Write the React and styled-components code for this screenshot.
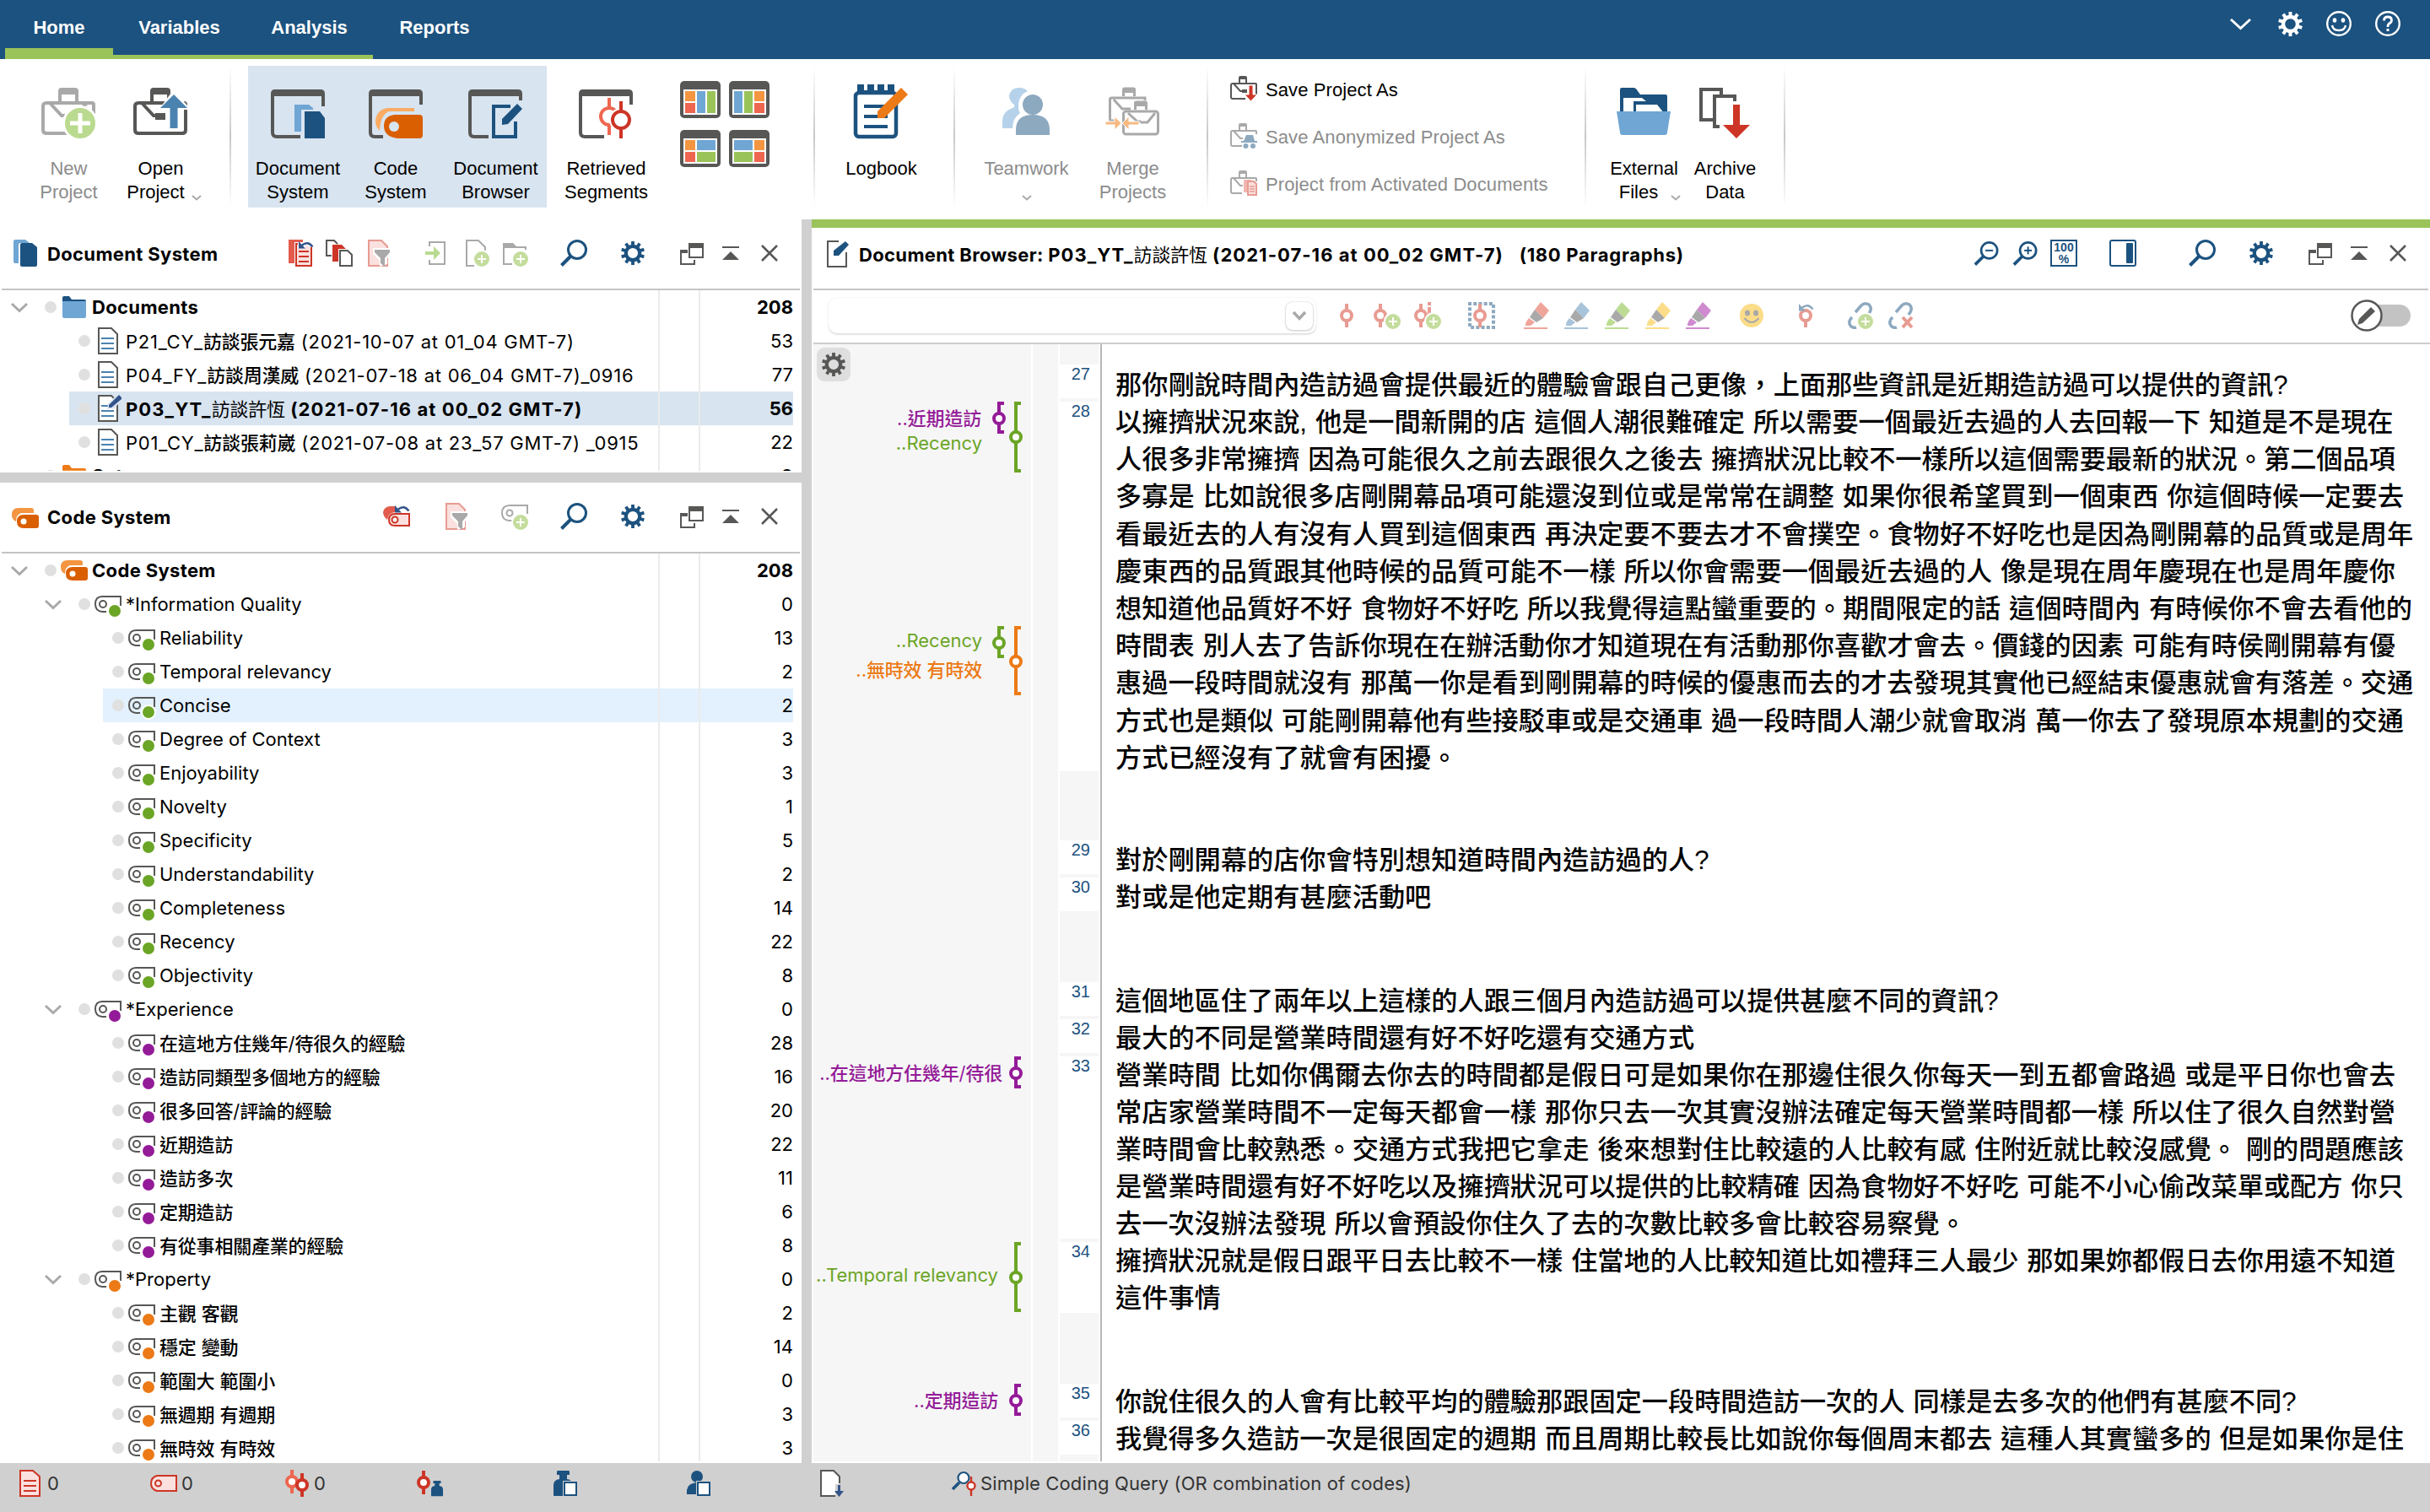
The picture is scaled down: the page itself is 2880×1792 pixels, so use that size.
import React from "react";
import styled, { createGlobalStyle, css } from "styled-components";

const C = {
  navy: "#1c527f",
  lime: "#9ac45a",
  ink: "#575756",
  grey: "#a9a9a9",
  bar: "#d0d0d0",
  line: "#c4c4c4",
  sky: "#6fa6d4",
  red: "#cd3526",
  coral: "#ee6650",
  orange: "#ec7a16",
  deepOrange: "#da5f00",
  select: "#d8e4f0",
  hover: "#e3f1fe",
  margin: "#f6f6f6",
  paleRed: "#e89b92",
  blush: "#fae0de",
  paleGreen: "#c4dc9c",
  paleNavy: "#8da9c0",
  codeGreen: "#6ba526",
  codePurple: "#941b98",
};

const ui = `Inter, "Noto Sans CJK TC", sans-serif`;
const arial = `"Liberation Sans", "Noto Sans CJK TC", sans-serif`;

const Global = createGlobalStyle`
  *, *::before, *::after { box-sizing: border-box; }
  body { margin: 0; background: #fff; }
  svg { display: block; flex: none; overflow: visible; }
`;

/* ---------- text helpers ---------- */

const Han = styled.span`
  font-family: "Noto Sans CJK TC", sans-serif;
  font-weight: ${(p) => p.$weight};
  letter-spacing: -0.2px;
`;
const Tracked = styled.span`
  letter-spacing: ${(p) => p.$ls}px;
`;

function Mixed({ children, weight = 500 }) {
  return String(children)
    .split(/([\u3000-\u9fff\uff00-\uffef]+)/)
    .filter(Boolean)
    .map((part, i) =>
      /[\u3000-\u9fff\uff00-\uffef]/.test(part) ? (
        <Han key={i} $weight={weight}>{part}</Han>
      ) : (
        <React.Fragment key={i}>{part}</React.Fragment>
      )
    );
}

/* ---------- drawing primitives ---------- */

const Svg = ({ w, h, children }) => (
  <svg width={w} height={h} viewBox={`0 0 ${w} ${h}`} fill="none">{children}</svg>
);

const Chevron = ({ w = 20, h = 11, color = C.grey, s = 3 }) => (
  <Svg w={w} h={h}>
    <path d={`M1 1L${w / 2} ${h - 1.5}L${w - 1} 1`} stroke={color} strokeWidth={s} />
  </Svg>
);

const Gear = ({ size = 28, color = C.navy }) => (
  <svg width={size} height={size} viewBox="-14 -14 28 28" fill="none">
    {Array.from({ length: 10 }, (_, i) => (
      <rect key={i} x="-1.9" y="-14" width="3.8" height="6" fill={color} transform={`rotate(${i * 36})`} />
    ))}
    <circle r="8.2" stroke={color} strokeWidth="4.2" />
  </svg>
);

const Search = ({ mark, w = 32, h = 32 }) => (
  <svg width={w} height={h} viewBox="0 0 32 32" fill="none">
    <circle cx="20" cy="12" r="10.5" stroke={C.navy} strokeWidth="3" />
    <path d="M12.5 19.5L1.5 30.5" stroke={C.navy} strokeWidth="4" />
    {mark && <path d="M15 12h10" stroke={C.navy} strokeWidth="2.2" />}
    {mark === "+" && <path d="M20 7v10" stroke={C.navy} strokeWidth="2.2" />}
  </svg>
);

const Plus = ({ cx, cy, r = 9, color = C.paleGreen, arm = 5, s = 2, ring = 2 }) => (
  <g>
    <circle cx={cx} cy={cy} r={r + ring / 2} fill={color} stroke="#fff" strokeWidth={ring} />
    <path d={`M${cx - arm} ${cy}h${arm * 2}M${cx} ${cy - arm}v${arm * 2}`} stroke="#fff" strokeWidth={s} />
  </g>
);

const Knot = ({ x, y, color, r = 6, s = 4, top, bottom, fill = "none" }) => (
  <g stroke={color} strokeWidth={s}>
    <path d={`M${x} ${top}V${y - r}M${x} ${y + r}V${bottom}`} />
    <circle cx={x} cy={y} r={r} fill={fill} />
  </g>
);

/* ---------- ribbon icons, 64 x 64 ---------- */

const Case = ({ color, x = 0, y = 4, right = true }) => (
  <g transform={`translate(${x} ${y})`}>
    <path d="M20 16V4q0-4 4-4h16q4 0 4 4v12h-4V8H24v8z" fill={color} />
    <path
      d={right ? "M62 26V20q0-2-2-2H6q-4 0-4 4v28q0 4 4 4h52q4 0 4-4V26" : "M36 54H6q-4 0-4-4V22q0-4 4-4h52q4 0 4 4v2"}
      stroke={color}
      strokeWidth="4"
    />
    <path d="M10 18L24 33h4" stroke={color} strokeWidth="4" />
  </g>
);

const NewProjectIcon = () => (
  <Svg w={64} h={64}>
    <Case color={C.grey} />
    <path d="M54 22L42 34" stroke={C.grey} strokeWidth="4" />
    <Plus cx={46} cy={46} r={18} color="#b9da8f" arm={12} s={5} ring={3} />
  </Svg>
);

const OpenProjectIcon = () => (
  <Svg w={64} h={64}>
    <Case color={C.ink} />
    <path d="M26 34h12v8H26z" fill={C.ink} />
    <path d="M48 6L68 30H55V56H42V30H30z" fill="#fff" />
    <path d="M48 12L64 28H52.500V52H43.500V28H32z" fill="#4b83b0" />
  </Svg>
);

const Frame = ({ side, foot }) => (
  <g transform="translate(0 6)">
    <path d="M0 8V5q0-5 5-5h54q5 0 5 5v3z" fill={C.ink} />
    <path d={`M2 6V51q0 5 5 5H${foot}M62 6V${side}`} stroke={C.ink} strokeWidth="4" />
  </g>
);

const DocSystemIcon = () => (
  <Svg w={64} h={64}>
    <Frame side={20} foot={35} />
    <path d="M28 24H45L50 28V30H36V56H28z" fill={C.sky} />
    <path d="M40 32H58L64 40V64H40z" fill={C.navy} />
  </Svg>
);

const CodeSystemIcon = () => (
  <Svg w={64} h={64}>
    <Frame side={18} foot={17} />
    <path d="M54 28H22Q9 30 8 44Q8 50 13 55Q14 36 24 32H54z" fill="#fbac64" />
    <path d="M30 36H60q4 0 4 4V60q0 4-4 4H34Q18 62 18 49Q18 38 30 36z" fill={C.deepOrange} />
    <circle cx="30" cy="50" r="6" fill={C.select} />
  </Svg>
);

const DocBrowserIcon = () => (
  <Svg w={64} h={64}>
    <Frame side={13} foot={24} />
    <path d="M50 26H30V62H56V44" stroke={C.navy} strokeWidth="4" />
    <path d="M58 23L64 29L47 47L40 48L40 41z" fill={C.navy} />
  </Svg>
);

const SegmentsIcon = () => (
  <Svg w={64} h={64}>
    <Frame side={18} foot={30} />
    <Knot x={36} y={38} r={10} color={C.coral} top={16} bottom={60} />
    <circle cx="50" cy="42" r="14" fill="#fff" />
    <Knot x={50} y={42} r={10} color={C.red} top={20} bottom={64} />
  </Svg>
);

const LogbookIcon = () => (
  <Svg w={64} h={64}>
    <path d="M4 12V0h8v7h4V0h8v7h4V0h8v7h4V0h8v12z" fill={C.navy} />
    <rect x="2" y="10" width="48" height="52" rx="4" stroke={C.navy} strokeWidth="4.500" />
    <path d="M12 26h24M12 38h28M12 50h28" stroke={C.navy} strokeWidth="4" />
    <path d="M56 4L64 12L36 40H28V32z" fill={C.orange} />
  </Svg>
);

const TeamIcon = () => (
  <Svg w={56} h={64}>
    <path d="M0 52V44Q0 32 12 28Q15 27 14 24Q8 20 8 13Q10 4 20 4Q26 4 30 8Q20 12 19 24Q19 32 21 34Q12 40 12 52z" fill="#b6d2ea" />
    <circle cx="36" cy="24" r="12" fill={C.paleNavy} />
    <path d="M16 60V54Q16 36 36 36Q56 36 56 54V60z" fill={C.paleNavy} />
  </Svg>
);

const MergeIcon = () => (
  <Svg w={64} h={64}>
    <g stroke={C.grey} strokeWidth="3">
      <path d="M21.500 14V6q0-1 1-1h11q1 0 1 1V14M11 43H6q-.5 0-.5-3V18q0-2 2-2H47v3M10 18L20 29h10" />
      <path d="M35.500 30V22q0-1 1-1h11q1 0 1 1V30" />
      <rect x="21.500" y="32" width="41" height="27" rx="3" fill="#fff" />
      <path d="M27 34L38 44h4M59 34L50 45h-8" />
    </g>
    <path d="M21 4h14v6H21zM35 20h14v6H35z" fill={C.grey} />
    <path d="M0 44h11v-6l8 8-8 8v-6H0zM40 44H28v-6l-8 8 8 8v-6h12z" fill="#f6ba82" stroke="#fff" strokeWidth="1" />
  </Svg>
);

const ExternalIcon = () => (
  <Svg w={64} h={64}>
    <path d="M4 34V6q0-2 2-2H20q3 0 5 4l3 4H58q2 0 2 2V34z" fill={C.navy} />
    <path d="M8 34V16H30l5 4H20V34zM23 34V24H48L56 34z" fill="#fff" />
    <path d="M0 32H64L60 57q0 3-3 3H7q-3 0-3-3z" fill={C.sky} />
  </Svg>
);

const ArchiveIcon = () => (
  <Svg w={60} h={64}>
    <path d="M26 14V6H2V42H16" stroke={C.ink} strokeWidth="4" />
    <path d="M42 20V14H18V50H24" stroke={C.ink} strokeWidth="4" />
    <path d="M40 24h8V48H60L44 64L28 48H40z" fill={C.red} />
  </Svg>
);

const LayoutIcon = ({ kind }) => {
  const o = "#f49541", r = C.coral, b = C.sky, g = C.lime;
  const cells = {
    a: [[6, 12, 12, 12, o], [6, 26, 12, 12, r], [20, 12, 10, 26, b], [32, 12, 10, 26, g]],
    b: [[6, 12, 10, 26, b], [18, 12, 10, 26, g], [30, 12, 12, 12, o], [30, 26, 12, 12, r]],
    c: [[6, 12, 12, 12, o], [6, 26, 12, 12, r], [20, 12, 22, 12, b], [20, 26, 22, 12, g]],
    d: [[6, 12, 22, 12, b], [6, 26, 22, 12, g], [30, 12, 12, 12, o], [30, 26, 12, 12, r]],
  }[kind];
  return (
    <Svg w={48} h={44}>
      <rect width="48" height="44" rx="5" fill={C.ink} />
      <rect x="4" y="10" width="40" height="30" fill="#fff" />
      {cells.map(([x, y, w, h, f], i) => <rect key={i} x={x} y={y} width={w} height={h} fill={f} />)}
    </Svg>
  );
};

const SmallCase = ({ color, children }) => (
  <Svg w={32} h={30}>
    <path d="M10 8V2q0-2 2-2h6q2 0 2 2v6h-2V4h-6v4z" fill={color} />
    <path d="M31 13V9.500q0-.5-1-.5H3Q1 9 1 11V25q0 2 2 2H14" stroke={color} strokeWidth="2" />
    <path d="M4 9l8 9h3" stroke={color} strokeWidth="2" />
    {children}
  </Svg>
);

const SaveIcon = () => (
  <SmallCase color={C.ink}>
    <path d="M14 27h4M31 12v10" stroke={C.ink} strokeWidth="2" />
    <path d="M14 16h6v4h-6z" fill={C.ink} />
    <path d="M22 11h5V22h5L24.500 30L17 22h5z" fill={C.red} stroke="#fff" strokeWidth="1" />
  </SmallCase>
);
const AnonIcon = () => (
  <SmallCase color={C.grey}>
    <path d="M19 14h8l2 7h3v2H13v-2h3z" fill={C.paleNavy} />
    <circle cx="18.500" cy="27" r="3" fill={C.paleNavy} />
    <circle cx="27" cy="27" r="3" fill={C.paleNavy} />
  </SmallCase>
);
const ActivatedIcon = () => (
  <SmallCase color={C.grey}>
    <path d="M16 11h9v3h-5v12h-4z" fill="#f3b5af" />
    <path d="M21 13h7l3 3v13H21z" fill={C.blush} stroke={C.paleRed} strokeWidth="2" />
    <path d="M23 19h6M23 22h6M23 25h6" stroke={C.paleRed} strokeWidth="1.500" />
  </SmallCase>
);

/* ---------- panel icons ---------- */

const DocStack = () => (
  <Svg w={28} h={32}>
    <path d="M0 2q0-2 2-2H14l5 4H8Q6 4 6 7V28H2q-2 0-2-2z" fill={C.sky} />
    <path d="M8 6q0-2 2-2H22l6 5V30q0 2-2 2H10q-2 0-2-2z" fill={C.navy} />
  </Svg>
);
const CodeStack = () => (
  <Svg w={32} h={24}>
    <path d="M8 0H23q3 0 3 3V6H11Q5 8 5 16Q0 14 0 8Q0 0 8 0z" fill="#f49541" />
    <path d="M14 8H29q3 0 3 3V21q0 3-3 3H14Q6 24 6 16Q6 8 14 8z" fill={C.deepOrange} />
    <circle cx="14" cy="16" r="3.500" fill="#fff" />
  </Svg>
);
const UndoArrow = ({ x, y, color = "#33548a" }) => (
  <g transform={`translate(${x} ${y})`}>
    <path d="M4 4.500Q11-1 16.500 6.500" stroke={color} strokeWidth="2.500" />
    <path d="M0 0V8.500H8z" fill={color} />
  </g>
);
const ResetDocs = () => (
  <Svg w={30} h={32}>
    <path d="M0 0H17V3H7V28H0z" fill="#e25b4d" />
    <path d="M9 5H27V31H9z" fill={C.blush} stroke={C.red} strokeWidth="2" />
    <path d="M12 14h12M12 20h12M12 26h12" stroke={C.red} strokeWidth="2" />
    <path d="M11 3H30V9H26L20 6V10H11z" fill="#fff" />
    <UndoArrow x={12} y={2} />
  </Svg>
);
const ThreeDocs = () => (
  <Svg w={32} h={32}>
    <path d="M7 19H1V1H10L14 5" stroke={C.ink} strokeWidth="2" />
    <path d="M8 6H19L24 11H15V26H8z" fill={C.red} />
    <path d="M17 31V13H26L31 18V31z" fill="#fff" stroke={C.ink} strokeWidth="2" />
  </Svg>
);
const FilterDoc = () => (
  <Svg w={26} h={32}>
    <path d="M1 31V1H16L23 8V31z" fill={C.blush} stroke={C.paleRed} strokeWidth="2" />
    <path d="M6 10H29V17L23 22V29H22L14 32V25L6 17z" fill="#fff" />
    <path d="M8 12H26V15L20 22V32L15 28V22L8 15z" fill={C.grey} />
  </Svg>
);
const ImportIcon = () => (
  <Svg w={24} h={28}>
    <path d="M5 6V1H23V27H5V22" stroke={C.grey} strokeWidth="2" />
    <path d="M0 12H10V6L18 14L10 22V16H0z" fill="#b9da8f" />
  </Svg>
);
const NewDoc = () => (
  <Svg w={28} h={32}>
    <path d="M10 31H1V1H15L23 9V13" stroke={C.grey} strokeWidth="2" />
    <Plus cx={19} cy={23} />
  </Svg>
);
const NewFolder = () => (
  <Svg w={30} h={28}>
    <path d="M0 0H12L16 4H28V6H0z" fill={C.grey} />
    <path d="M27 4V8M1 4V25H11" stroke={C.grey} strokeWidth="2" />
    <Plus cx={21} cy={19} />
  </Svg>
);
const ResetCodes = () => (
  <Svg w={32} h={26}>
    <path d="M8 2H14V9Q6 10 5 18Q0 14 0 9Q1 3 8 2z" fill="#e25b4d" />
    <path d="M14 11H31V25H14Q7 25 7 18Q7 11 14 11z" fill={C.blush} stroke={C.red} strokeWidth="2" />
    <circle cx="14" cy="18" r="3.500" fill="#fff" stroke={C.red} strokeWidth="2" />
    <UndoArrow x={14} y={1} />
  </Svg>
);
const NewCode = () => (
  <Svg w={32} h={30}>
    <path d="M13 19H9Q1 18 1 10Q1 1 10 1H31V11" stroke={C.grey} strokeWidth="2" />
    <circle cx="10" cy="10" r="3.500" stroke={C.grey} strokeWidth="2" />
    <Plus cx={23} cy={21} />
  </Svg>
);
const WindowIcon = () => (
  <Svg w={28} h={26}>
    <path d="M0 8H9V12H0z" fill={C.ink} />
    <path d="M1 10V25H17V20" stroke={C.ink} strokeWidth="2" />
    <rect x="11" y="1" width="16" height="16" stroke={C.ink} strokeWidth="2" />
    <path d="M10 0H28V6H10z" fill={C.ink} />
  </Svg>
);
const CollapseIcon = () => (
  <Svg w={20} h={16}>
    <path d="M0 0H20V2H0zM10 6L20 16H0z" fill={C.ink} />
  </Svg>
);
const CloseIcon = () => (
  <Svg w={20} h={20}>
    <path d="M1 1L19 19M19 1L1 19" stroke={C.ink} strokeWidth="2.500" />
  </Svg>
);
const EditDoc = () => (
  <Svg w={28} h={32}>
    <path d="M14 1H1V31H23V14" stroke={C.ink} strokeWidth="2" />
    <path d="M22 1L26 5L14 18H8V12z" fill={C.navy} />
  </Svg>
);
const PercentIcon = () => (
  <svg width="32" height="32" viewBox="0 0 32 32" fill="none">
    <rect x="1" y="1" width="30" height="30" stroke={C.navy} strokeWidth="2" />
    <text x="16" y="14" textAnchor="middle" fontFamily={arial} fontSize="14" fontWeight="700" fill={C.navy}>100</text>
    <text x="16" y="28" textAnchor="middle" fontFamily={arial} fontSize="14" fontWeight="700" fill={C.navy}>%</text>
  </svg>
);
const SidebarIcon = () => (
  <Svg w={32} h={32}>
    <rect x="1" y="1" width="30" height="30" rx="2" stroke={C.navy} strokeWidth="2" />
    <rect x="20" y="4" width="8" height="24" rx="1" fill={C.navy} />
  </Svg>
);

/* ---------- tree icons ---------- */

const Folder = ({ front = C.sky, back = C.navy }) => (
  <Svg w={28} h={26}>
    <path d="M0 8V2q0-2 2-2H8l3 4H26q2 0 2 2V8z" fill={back} />
    <path d="M0 6H28V24q0 2-2 2H2q-2 0-2-2z" fill={front} />
  </Svg>
);
const DocFile = ({ edit }) => (
  <Svg w={28} h={32}>
    <path d="M1 1H16L23 8V31H1z" fill="#fff" stroke={C.ink} strokeWidth="2" />
    <path d="M4 13h15M4 19h15M4 25h15" stroke="#4b83b0" strokeWidth="2" />
    {edit && (
      <>
        <path d="M23-1L30 3L20 16L11 17L12 11z" fill={C.select} />
        <path d="M25 0L28 3V5L16 15H13V12z" fill="#33548a" />
      </>
    )}
  </Svg>
);
const CodeTag = ({ color }) => (
  <Svg w={32} h={20}>
    <path d="M14 19H9Q1 18 1 10Q1 1 9 1H31V12" stroke={C.ink} strokeWidth="2" />
    <circle cx="10" cy="10" r="4" stroke={C.ink} strokeWidth="2" />
    <circle cx="24" cy="18" r="8" fill={color} stroke="#fff" strokeWidth="2" />
  </Svg>
);

/* ---------- coding toolbar icons ---------- */

const CodeMark = () => <Svg w={16} h={28}><Knot x={8} y={14} color={C.paleRed} top={0} bottom={28} /></Svg>;
const CodeMarkPlus = () => (
  <Svg w={32} h={30}>
    <Knot x={8} y={14} color={C.paleRed} top={0} bottom={28} />
    <Plus cx={23} cy={21} />
  </Svg>
);
const CodeMarkInfo = () => (
  <Svg w={32} h={32}>
    <Knot x={8} y={16} color={C.paleRed} top={2} bottom={30} />
    <path d="M18 0V4M18 6V15" stroke={C.paleRed} strokeWidth="4" />
    <Plus cx={23} cy={23} />
  </Svg>
);
const CodeFrame = () => (
  <Svg w={32} h={32}>
    <rect x="2" y="2" width="28" height="28" stroke={C.paleNavy} strokeWidth="4" strokeDasharray="4 2.220" strokeDashoffset="2" />
    <Knot x={14} y={16} color={C.paleRed} top={2} bottom={30} />
  </Svg>
);
const Marker = ({ color }) => (
  <Svg w={30} h={32}>
    <path d="M20 0L30 10L23 19L13 9z" fill={color} />
    <path d="M13 9L23 19L15 24L7 18z" fill={C.grey} />
    <path d="M6 19L13 24L8 28H2Q1 25 6 19z" fill={color} />
    <path d="M0 30H28V32H0z" fill={color} />
  </Svg>
);
const Smile = () => (
  <Svg w={28} h={28}>
    <circle cx="14" cy="14" r="14" fill="#fbdc88" />
    <ellipse cx="9" cy="11" rx="3" ry="3.500" fill={C.grey} />
    <ellipse cx="19" cy="11" rx="3" ry="3.500" fill={C.grey} />
    <path d="M5.500 17Q14 27 22.500 17" stroke={C.grey} strokeWidth="2" />
  </Svg>
);
const UndoCode = () => (
  <Svg w={18} h={28}>
    <Knot x={8} y={14} color={C.paleRed} top={0} bottom={28} />
    <path d="M0 0H18V6H0z" fill="#fff" />
    <UndoArrow x={0} y={0} color={C.paleNavy} />
  </Svg>
);
const Chain = () => (
  <g stroke={C.paleNavy} strokeWidth="3.500">
    <path d="M9 12L16 4Q20 0 25 3Q29 7 26 12L24 15" />
    <path d="M5 18Q-1 24 4 29Q7 31 10 30" />
  </g>
);
const LinkPlus = () => <Svg w={30} h={32}><Chain /><Plus cx={21} cy={23} /></Svg>;
const LinkCut = () => (
  <Svg w={30} h={32}>
    <Chain />
    <path d="M17 18L28 30M28 18L17 30" stroke={C.paleRed} strokeWidth="4" />
  </Svg>
);

/* ---------- status icons ---------- */

const StatusDoc = () => (
  <Svg w={25} h={32}>
    <path d="M1 1H16L24 8V31H1z" fill={C.blush} stroke={C.red} strokeWidth="2" />
    <path d="M5 13h15M5 19h15M5 25h15" stroke={C.red} strokeWidth="2" />
  </Svg>
);
const StatusTag = () => (
  <Svg w={32} h={20}>
    <path d="M8 1H31V19H8Q1 17 1 10Q1 3 8 1z" fill={C.blush} stroke={C.red} strokeWidth="2" />
    <circle cx="9.500" cy="10" r="3.500" stroke={C.red} strokeWidth="2" />
  </Svg>
);
const StatusCodes = () => (
  <Svg w={28} h={32}>
    <Knot x={8} y={14} color={C.coral} top={0} bottom={28} fill="#fff" />
    <Knot x={20} y={18} color={C.red} top={4} bottom={32} fill="#fff" />
  </Svg>
);
const Bottle = ({ x, y, k = 1 }) => (
  <path
    transform={`translate(${x} ${y}) scale(${k})`}
    d="M5 0H18q1 0 1 2v3h-3v5q7 1 7 7V29q0 1-1 1H1q-1 0-1-1V17q0-6 7-7V5H4V2q0-2 1-2z"
    fill={C.navy}
  />
);
const StatusCodeVar = () => (
  <Svg w={32} h={30}>
    <Knot x={8} y={14} color={C.red} top={0} bottom={28} fill="#fff" />
    <Bottle x={17} y={12} k={0.61} />
  </Svg>
);
const Sheet = () => <path d="M13 14H27V29H13z" fill="#fff" stroke={C.navy} strokeWidth="2" />;
const StatusDocVar = () => <Svg w={28} h={30}><Bottle x={0} y={0} /><path d="M11 12H28V30H11z" fill={C.bar} /><Sheet /></Svg>;
const StatusPerson = () => (
  <Svg w={28} h={30}>
    <circle cx="12" cy="7" r="7" fill={C.navy} />
    <path d="M0 28V23Q1 15 12 14V28z" fill={C.navy} />
    <path d="M11 12H28V30H11z" fill={C.bar} />
    <Sheet />
  </Svg>
);
const StatusExport = () => (
  <Svg w={28} h={32}>
    <path d="M18 31H1V1H16L23 8V16" fill="#fff" stroke={C.ink} strokeWidth="2" />
    <path d="M18 17h9v14h-9z" fill={C.bar} />
    <path d="M21 18h3v7h4l-5.500 7-5.500-7h4z" fill="#33548a" />
  </Svg>
);
const StatusQuery = () => (
  <Svg w={30} h={29}>
    <circle cx="14" cy="7.500" r="6.500" fill="#fff" stroke={C.navy} strokeWidth="2.200" />
    <path d="M9 13L1 21" stroke={C.navy} strokeWidth="3.500" />
    <Knot x={23} y={17} r={4.5} s={2.4} color={C.red} top={6} bottom={29} fill="#fff" />
  </Svg>
);

/* ---------- shell ---------- */

const Shell = styled.div`
  width: 2880px;
  height: 1792px;
  display: flex;
  flex-direction: column;
  overflow: hidden;
  background: #fff;
  color: #000;
  font-family: ${ui};
  font-size: 22px;
`;

const TopBar = styled.header`
  height: 70px;
  flex: none;
  display: flex;
  padding-left: 6px;
  background: ${C.navy};
  font-family: ${arial};
`;
const Tab = styled.div`
  width: ${(p) => p.$w}px;
  height: 70px;
  padding-top: 20px;
  line-height: 25px;
  text-align: center;
  font-weight: 700;
  color: #fff;
  border-bottom: ${(p) => p.$bar}px solid ${C.lime};
`;
const TopIcons = styled.div`
  margin-left: auto;
  height: 56px;
  padding-right: 35px;
  display: flex;
  align-items: center;
`;
const Slot = styled.div`
  flex: none;
  margin-left: ${(p) => p.$ml || 0}px;
  margin-top: ${(p) => p.$mt || 0}px;
  ${(p) => p.$w && css`width: ${p.$w}px;`}
`;

const Ribbon = styled.nav`
  height: 190px;
  flex: none;
  display: flex;
  align-items: flex-start;
  padding: 8px 0 0 22px;
  font-family: ${arial};
`;
const Separator = styled.div`
  width: 2px;
  height: 168px;
  margin: 0 ${(p) => p.$r}px 0 ${(p) => p.$l}px;
  background: linear-gradient(#fff, #c8c8c8 50%, #fff);
`;
const Pressed = styled.div`
  display: flex;
  background: ${C.select};
`;
const BigButton = styled.div`
  width: ${(p) => p.$w}px;
  height: 168px;
  padding-top: 22px;
  display: flex;
  flex-direction: column;
  align-items: center;
  color: ${(p) => (p.$off ? "#8c8c8c" : "#000")};
`;
const Caption = styled.div`
  margin-top: 22px;
  padding-left: 1px;
  line-height: 28px;
  text-align: center;
  white-space: nowrap;
`;
const CaptionRow = styled.div`
  display: flex;
  justify-content: center;
  align-items: center;
  height: 28px;
  margin-left: ${(p) => p.$shift || 0}px;
  gap: ${(p) => p.$gap || 8}px;
  svg { margin-top: 12px; }
`;
const LayoutGrid = styled.div`
  display: grid;
  grid-template-columns: 48px 48px;
  gap: 14px 10px;
  padding: 18px 0 0 18px;
`;
const SaveList = styled.div`
  display: flex;
  flex-direction: column;
  gap: 26px;
  padding-top: 12px;
  width: 422px;
`;
const SaveItem = styled.div`
  display: flex;
  align-items: center;
  gap: 10px;
  height: 30px;
  white-space: nowrap;
  letter-spacing: 0.1px;
  color: ${(p) => (p.$off ? "#8c8c8c" : "#000")};
`;
const SaveText = styled.span`
  padding-top: 3px;
`;

const Main = styled.main`
  height: 1474px;
  flex: none;
  display: flex;
`;
const Side = styled.aside`
  width: 950px;
  display: flex;
  flex-direction: column;
`;
const Splitter = styled.div`
  flex: none;
  background: ${C.bar};
  ${(p) => (p.$vertical ? "width: 12px;" : "height: 12px;")}
`;
const Panel = styled.section`
  height: ${(p) => p.$h}px;
  display: flex;
  flex-direction: column;
  padding-bottom: 2px;
`;
const PanelHead = styled.div`
  height: ${(p) => p.$h}px;
  flex: none;
  margin: 0 2px;
  padding: 0 ${(p) => p.$pr}px ${(p) => p.$pb}px ${(p) => p.$pl}px;
  display: flex;
  align-items: center;
  border-bottom: 2px solid ${C.line};
`;
const PanelTitle = styled.h2`
  margin: 2px auto 0 ${(p) => p.$ml}px;
  font-size: 22px;
  line-height: 28px;
  font-weight: 700;
  white-space: pre;
  letter-spacing: 0.35px;
`;

/* ---------- tree ---------- */

const Tree = styled.div`
  flex: 1;
  min-height: 0;
  overflow: hidden;
  display: flex;
  flex-direction: column;
`;
const Row = styled.div`
  height: 40px;
  flex: none;
  display: flex;
  padding-right: 10px;
`;
const Indent = styled.div`
  width: ${(p) => 42 + 40 * p.$level}px;
  padding-right: 9px;
  display: flex;
  align-items: center;
  justify-content: flex-end;
`;
const RowBody = styled.div`
  flex: 1;
  display: flex;
  align-items: center;
  padding-left: 11px;
  background: ${(p) => p.$bg || "transparent"};
  font-weight: ${(p) => (p.$bold ? 700 : 400)};
`;
const Bullet = styled.span`
  width: 14px;
  height: 14px;
  border-radius: 50%;
  background: #e0e0e0;
`;
const IconCell = styled.span`
  width: 32px;
  margin: 0 5px;
  padding-left: ${(p) => p.$pad || 0}px;
`;
const Name = styled.span`
  flex: 1;
  line-height: 28px;
  white-space: nowrap;
  letter-spacing: ${(p) => p.$ls || 0}px;
`;
const Cell = styled.span`
  width: ${(p) => p.$w}px;
  height: 40px;
  line-height: 40px;
  border-left: 2px solid #ebebeb;
  text-align: right;
`;

function TreeRow({ level, open, icon, pad, name, count, bold, bg, ls }) {
  return (
    <Row>
      <Indent $level={level}>{open && <Chevron />}</Indent>
      <RowBody $bg={bg} $bold={bold}>
        <Bullet />
        <IconCell $pad={pad}>{icon}</IconCell>
        <Name $ls={ls}><Mixed weight={bold ? 400 : 500}>{name}</Mixed></Name>
        <Cell $w={48} />
        <Cell $w={112}>{count}</Cell>
      </RowBody>
    </Row>
  );
}

const documents = [
  ["P21_CY_訪談張元嘉 (2021-10-07 at 01_04 GMT-7)", 53],
  ["P04_FY_訪談周漢威 (2021-07-18 at 06_04 GMT-7)_0916", 77],
  ["P03_YT_訪談許恆 (2021-07-16 at 00_02 GMT-7)", 56, true],
  ["P01_CY_訪談張莉崴 (2021-07-08 at 23_57 GMT-7) _0915", 22],
];

const codeGroups = [
  ["*Information Quality", C.codeGreen, [
    ["Reliability", 13], ["Temporal relevancy", 2], ["Concise", 2, true], ["Degree of Context", 3],
    ["Enjoyability", 3], ["Novelty", 1], ["Specificity", 5], ["Understandability", 2],
    ["Completeness", 14], ["Recency", 22], ["Objectivity", 8],
  ]],
  ["*Experience", C.codePurple, [
    ["在這地方住幾年/待很久的經驗", 28], ["造訪同類型多個地方的經驗", 16], ["很多回答/評論的經驗", 20],
    ["近期造訪", 22], ["造訪多次", 11], ["定期造訪", 6], ["有從事相關產業的經驗", 8],
  ]],
  ["*Property", C.orange, [
    ["主觀 客觀", 2], ["穩定 變動", 14], ["範圍大 範圍小", 0], ["無週期 有週期", 3], ["無時效 有時效", 3],
  ]],
];

/* ---------- document browser ---------- */

const Browser = styled.section`
  flex: 1;
  min-width: 0;
  display: flex;
  flex-direction: column;
  border-top: 10px solid ${C.lime};
  padding-bottom: 2px;
`;
const CodeBar = styled.div`
  height: 64px;
  flex: none;
  margin-left: 2px;
  padding: 0 23px 2px 18px;
  display: flex;
  align-items: center;
  border-bottom: 2px solid #cdcdcd;
`;
const Combo = styled.div`
  width: 578px;
  height: 42px;
  padding: 0 4px;
  display: flex;
  align-items: center;
  justify-content: flex-end;
  border-radius: 10px;
  box-shadow: 0 0 2px rgba(0, 0, 0, 0.1), 0 2px 2px rgba(0, 0, 0, 0.1);
`;
const ComboButton = styled.div`
  width: 32px;
  height: 33px;
  display: flex;
  align-items: center;
  justify-content: center;
  border-radius: 8px;
  box-shadow: 0 0 2px rgba(0, 0, 0, 0.18), 0 1px 3px rgba(0, 0, 0, 0.18);
`;
const Toggle = styled.div`
  width: 71px;
  height: 26px;
  margin-left: auto;
  display: flex;
  align-items: center;
  border-radius: 13px;
  background: linear-gradient(90deg, transparent 20px, #c3c3c3 20px);
`;

const Page = styled.div`
  flex: 1;
  min-height: 0;
  display: flex;
  overflow: hidden;
  padding-left: 2px;
`;
const Stripes = styled.div`
  position: relative;
  width: 258px;
  background: ${C.margin};
  padding: 4px;
`;
const MemoLane = styled.div`
  width: 30px;
  margin: 0 2px;
  background: ${C.margin};
`;
const GearButton = styled.div`
  width: 40px;
  height: 40px;
  display: flex;
  align-items: center;
  justify-content: center;
  border-radius: 9px;
  background: #dedede;
`;
const Numbers = styled.div`
  width: 46px;
  margin-right: 2px;
  padding-top: 24px;
  background: ${C.margin};
`;
const NumberCell = styled.div`
  height: ${(p) => p.$h - 4}px;
  margin-bottom: ${(p) => 4 + p.$gap}px;
  padding-right: 10px;
  line-height: 23px;
  text-align: right;
  font-family: ${arial};
  font-size: 20px;
  color: ${C.navy};
  background: #fff;
`;
const Text = styled.article`
  flex: 1;
  border-left: 2px solid #b8b8b8;
  padding: 27px 0 0 16px;
  font-family: ${arial};
  font-size: 31.2px;
  font-weight: 500;
  word-spacing: 1.3px;
`;
const Paragraph = styled.div`
  height: ${(p) => p.$lines * p.$pitch}px;
  line-height: ${(p) => p.$pitch}px;
  margin-bottom: ${(p) => p.$gap}px;
  white-space: pre;
`;
const Stripe = styled.div`
  position: absolute;
  left: ${(p) => p.$x - 972}px;
  top: ${(p) => p.$y - 408}px;
`;
const StripeLabel = styled.div`
  position: absolute;
  right: ${(p) => 1222 - p.$right}px;
  top: ${(p) => p.$y - 408 - 14}px;
  line-height: 28px;
  white-space: nowrap;
  color: ${(p) => p.$color};
`;

const stripes = [
  [1184, 476, 38, 20, C.codePurple],
  [1204, 476, 84, 42, C.codeGreen],
  [1184, 742, 38, 20, C.codeGreen],
  [1204, 742, 82, 42, C.orange],
  [1204, 1252, 38, 20, C.codePurple],
  [1204, 1472, 83, 42, C.codeGreen],
  [1204, 1640, 38, 20, C.codePurple],
];
const stripeLabels = [
  ["..近期造訪", 1163, 494, C.codePurple],
  ["..Recency", 1164, 525, C.codeGreen],
  ["..Recency", 1164, 759, C.codeGreen],
  ["..無時效 有時效", 1164, 792, C.orange],
  ["..在這地方住幾年/待很", 1188, 1270, C.codePurple],
  ["..Temporal relevancy", 1183, 1511, C.codeGreen],
  ["..定期造訪", 1183, 1658, C.codePurple],
];

/* number, blank space after the number cell, lines, line pitch, blank space after the text */
const paragraphs = [
  [27, 0, ["那你剛說時間內造訪過會提供最近的體驗會跟自己更像，上面那些資訊是近期造訪過可以提供的資訊?"]],
  [28, 78, [
    "以擁擠狀況來說, 他是一間新開的店 這個人潮很難確定 所以需要一個最近去過的人去回報一下 知道是不是現在",
    "人很多非常擁擠 因為可能很久之前去跟很久之後去 擁擠狀況比較不一樣所以這個需要最新的狀況。第二個品項",
    "多寡是 比如說很多店剛開幕品項可能還沒到位或是常常在調整 如果你很希望買到一個東西 你這個時候一定要去",
    "看最近去的人有沒有人買到這個東西 再決定要不要去才不會撲空。食物好不好吃也是因為剛開幕的品質或是周年",
    "慶東西的品質跟其他時候的品質可能不一樣 所以你會需要一個最近去過的人 像是現在周年慶現在也是周年慶你",
    "想知道他品質好不好 食物好不好吃 所以我覺得這點蠻重要的。期間限定的話 這個時間內 有時候你不會去看他的",
    "時間表 別人去了告訴你現在在辦活動你才知道現在有活動那你喜歡才會去。價錢的因素 可能有時侯剛開幕有優",
    "惠過一段時間就沒有 那萬一你是看到剛開幕的時候的優惠而去的才去發現其實他已經結束優惠就會有落差。交通",
    "方式也是類似 可能剛開幕他有些接駁車或是交通車 過一段時間人潮少就會取消 萬一你去了發現原本規劃的交通",
    "方式已經沒有了就會有困擾。",
  ], 44.2, 77],
  [29, 0, ["對於剛開幕的店你會特別想知道時間內造訪過的人?"]],
  [30, 80, ["對或是他定期有甚麼活動吧"], 44, 79],
  [31, 0, ["這個地區住了兩年以上這樣的人跟三個月內造訪過可以提供甚麼不同的資訊?"]],
  [32, 0, ["最大的不同是營業時間還有好不好吃還有交通方式"]],
  [33, 0, [
    "營業時間 比如你偶爾去你去的時間都是假日可是如果你在那邊住很久你每天一到五都會路過 或是平日你也會去",
    "常店家營業時間不一定每天都會一樣 那你只去一次其實沒辦法確定每天營業時間都一樣 所以住了很久自然對營",
    "業時間會比較熟悉。交通方式我把它拿走 後來想對住比較遠的人比較有感 住附近就比較沒感覺。 剛的問題應該",
    "是營業時間還有好不好吃以及擁擠狀況可以提供的比較精確 因為食物好不好吃 可能不小心偷改菜單或配方 你只",
    "去一次沒辦法發現 所以會預設你住久了去的次數比較多會比較容易察覺。",
  ]],
  [34, 80, [
    "擁擠狀況就是假日跟平日去比較不一樣 住當地的人比較知道比如禮拜三人最少 那如果妳都假日去你用遠不知道",
    "這件事情",
  ], 44, 79],
  [35, 0, ["你說住很久的人會有比較平均的體驗那跟固定一段時間造訪一次的人 同樣是去多次的他們有甚麼不同?"]],
  [36, 0, ["我覺得多久造訪一次是很固定的週期 而且周期比較長比如說你每個周末都去 這種人其實蠻多的 但是如果你是住"]],
];

/* ---------- status ---------- */

const Status = styled.footer`
  height: 58px;
  flex: none;
  display: flex;
  align-items: center;
  padding: 0 0 10px 23px;
  background: ${C.bar};
  color: #333;
`;
const StatusItem = styled.div`
  width: ${(p) => p.$w}px;
  display: flex;
  align-items: center;
  gap: ${(p) => p.$gap || 0}px;
  white-space: nowrap;
  line-height: 28px;
  letter-spacing: 0.12px;
`;

const WindowControls = () => (
  <>
    <Slot $ml={42} $mt={2}><WindowIcon /></Slot>
    <Slot $ml={22}><CollapseIcon /></Slot>
    <Slot $ml={26}><CloseIcon /></Slot>
  </>
);

export default function App() {
  return (
    <Shell>
      <Global />
      <TopBar>
        <Tab $w={128} $bar={13}>Home</Tab>
        <Tab $w={157} $bar={5}>Variables</Tab>
        <Tab $w={151} $bar={5}>Analysis</Tab>
        <Tab $w={146} $bar={0}>Reports</Tab>
        <TopIcons>
          <Slot><Chevron w={25} h={13} color="#fff" s={3} /></Slot>
          <Slot $ml={32}><Gear size={29} color="#fff" /></Slot>
          <Slot $ml={28}>
            <Svg w={30} h={30}>
              <circle cx="15" cy="15" r="13.800" stroke="#fff" strokeWidth="2.400" />
              <ellipse cx="10" cy="11" rx="2.300" ry="2.800" fill="#fff" />
              <ellipse cx="20" cy="11" rx="2.300" ry="2.800" fill="#fff" />
              <path d="M7 17Q8 23 15 23Q22 23 23 17" stroke="#fff" strokeWidth="2.400" />
            </Svg>
          </Slot>
          <Slot $ml={28}>
            <Svg w={30} h={30}>
              <circle cx="15" cy="15" r="13.800" stroke="#fff" strokeWidth="2.400" />
              <path d="M10.500 11.500Q10.500 7 15 7Q19.500 7 19.500 11Q19.500 13.500 16.500 15Q15 16 15 19" stroke="#fff" strokeWidth="2.800" />
              <path d="M13.500 21h3v3h-3z" fill="#fff" />
            </Svg>
          </Slot>
        </TopIcons>
      </TopBar>

      <Ribbon>
        <BigButton $w={118} $off>
          <NewProjectIcon />
          <Caption>New<br />Project</Caption>
        </BigButton>
        <BigButton $w={100}>
          <OpenProjectIcon />
          <Caption>Open<CaptionRow $shift={8}>Project<Chevron w={12} h={7} s={2} /></CaptionRow></Caption>
        </BigButton>
        <Separator $l={32} $r={20} />
        <Pressed>
          <BigButton $w={117}><DocSystemIcon /><Caption>Document<br />System</Caption></BigButton>
          <BigButton $w={115}><CodeSystemIcon /><Caption>Code<br />System</Caption></BigButton>
          <BigButton $w={122}><DocBrowserIcon /><Caption>Document<br />Browser</Caption></BigButton>
        </Pressed>
        <BigButton $w={140}><SegmentsIcon /><Caption>Retrieved<br />Segments</Caption></BigButton>
        <LayoutGrid>
          <LayoutIcon kind="a" /><LayoutIcon kind="b" />
          <LayoutIcon kind="c" /><LayoutIcon kind="d" />
        </LayoutGrid>
        <Separator $l={52} $r={18} />
        <BigButton $w={120}><LogbookIcon /><Caption>Logbook</Caption></BigButton>
        <Separator $l={26} $r={24} />
        <BigButton $w={120} $off>
          <TeamIcon />
          <Caption>Teamwork<CaptionRow><Chevron w={12} h={7} s={2} /></CaptionRow></Caption>
        </BigButton>
        <BigButton $w={132} $off><MergeIcon /><Caption>Merge<br />Projects</Caption></BigButton>
        <Separator $l={22} $r={26} />
        <SaveList>
          <SaveItem><SaveIcon /><SaveText>Save Project As</SaveText></SaveItem>
          <SaveItem $off><AnonIcon /><SaveText>Save Anonymized Project As</SaveText></SaveItem>
          <SaveItem $off><ActivatedIcon /><SaveText>Project from Activated Documents</SaveText></SaveItem>
        </SaveList>
        <Separator $l={-2} $r={20} />
        <BigButton $w={96}>
          <ExternalIcon />
          <Caption>External<CaptionRow $shift={14} $gap={15}>Files<Chevron w={12} h={7} s={2} /></CaptionRow></Caption>
        </BigButton>
        <BigButton $w={96}><ArchiveIcon /><Caption>Archive<br />Data</Caption></BigButton>
        <Separator $l={22} $r={0} />
      </Ribbon>

      <Main>
        <Side>
          <Panel $h={300}>
            <PanelHead $h={84} $pl={14} $pr={26} $pb={2}>
              <DocStack />
              <PanelTitle $ml={12}>Document System</PanelTitle>
              <Slot><ResetDocs /></Slot>
              <Slot $ml={14}><ThreeDocs /></Slot>
              <Slot $ml={18}><FilterDoc /></Slot>
              <Slot $ml={42}><ImportIcon /></Slot>
              <Slot $ml={24}><NewDoc /></Slot>
              <Slot $ml={16} $mt={4}><NewFolder /></Slot>
              <Slot $ml={38}><Search /></Slot>
              <Slot $ml={40}><Gear size={28} /></Slot>
              <WindowControls />
            </PanelHead>
            <Tree>
              <TreeRow level={0} open bold ls={0.35} name="Documents" count={208} icon={<Folder />} pad={2} />
              {documents.map(([name, count, on]) => (
                <TreeRow key={name} level={1} name={name} count={count} bold={on} ls={on ? 1.1 : 0.75} bg={on && C.select} icon={<DocFile edit={on} />} pad={4} />
              ))}
              <TreeRow level={0} bold ls={0.35} name="Sets" count={0} icon={<Folder front="#f49541" back={C.orange} />} pad={2} />
            </Tree>
          </Panel>
          <Splitter />
          <Panel $h={1162}>
            <PanelHead $h={84} $pl={12} $pr={26} $pb={2}>
              <Slot $mt={4}><CodeStack /></Slot>
              <PanelTitle $ml={10}>Code System</PanelTitle>
              <Slot $mt={-2}><ResetCodes /></Slot>
              <Slot $ml={42}><FilterDoc /></Slot>
              <Slot $ml={40} $mt={2}><NewCode /></Slot>
              <Slot $ml={38}><Search /></Slot>
              <Slot $ml={40}><Gear size={28} /></Slot>
              <WindowControls />
            </PanelHead>
            <Tree>
              <TreeRow level={0} open bold ls={0.35} name="Code System" count={208} icon={<CodeStack />} />
              {codeGroups.map(([group, color, codes]) => (
                <React.Fragment key={group}>
                  <TreeRow level={1} open name={group} count={0} icon={<CodeTag color={color} />} />
                  {codes.map(([name, count, on]) => (
                    <TreeRow key={name} level={2} name={name} count={count} bg={on && C.hover} icon={<CodeTag color={color} />} />
                  ))}
                </React.Fragment>
              ))}
            </Tree>
          </Panel>
        </Side>
        <Splitter $vertical />
        <Browser>
          <PanelHead $h={74} $pl={16} $pr={26} $pb={12}>
            <Slot $mt={2}><EditDoc /></Slot>
            <PanelTitle $ml={10}>
              {"Document Browser: "}
              <Tracked $ls={1.05}><Mixed weight={400}>{"P03_YT_訪談許恆 (2021-07-16 at 00_02 GMT-7)   "}</Mixed></Tracked>
              <Tracked $ls={0.7}>(180 Paragraphs)</Tracked>
            </PanelTitle>
            <Slot><Search mark="-" w={30} h={29} /></Slot>
            <Slot $ml={16}><Search mark="+" w={30} h={29} /></Slot>
            <Slot $ml={15}><PercentIcon /></Slot>
            <Slot $ml={38}><SidebarIcon /></Slot>
            <Slot $ml={62}><Search /></Slot>
            <Slot $ml={40}><Gear size={28} /></Slot>
            <WindowControls />
          </PanelHead>
          <CodeBar>
            <Combo><ComboButton><Chevron w={16} h={10} s={3.5} /></ComboButton></Combo>
            <Slot $ml={28}><CodeMark /></Slot>
            <Slot $ml={24} $mt={2}><CodeMarkPlus /></Slot>
            <Slot $ml={16}><CodeMarkInfo /></Slot>
            <Slot $ml={32}><CodeFrame /></Slot>
            <Slot $ml={34}><Marker color="#f0a59a" /></Slot>
            <Slot $ml={18}><Marker color="#a8c3da" /></Slot>
            <Slot $ml={18}><Marker color="#bcdc94" /></Slot>
            <Slot $ml={18}><Marker color="#fbdc88" /></Slot>
            <Slot $ml={18}><Marker color="#cf8ad0" /></Slot>
            <Slot $ml={34}><Smile /></Slot>
            <Slot $ml={42}><UndoCode /></Slot>
            <Slot $ml={40}><LinkPlus /></Slot>
            <Slot $ml={18}><LinkCut /></Slot>
            <Toggle>
              <Svg w={38} h={38}>
                <circle cx="19" cy="19" r="17.500" fill="#fff" stroke={C.ink} strokeWidth="2.500" />
                <path d="M24 9L29 14L14 28L8 30L10 23z" fill={C.ink} />
              </Svg>
            </Toggle>
          </CodeBar>
          <Page>
            <Stripes>
              <GearButton><Gear size={28} color={C.ink} /></GearButton>
              {stripes.map(([x, y, h, c, color], i) => (
                <Stripe key={i} $x={x} $y={y}>
                  <Svg w={16} h={h}>
                    <path d={`M14 2H8V${c - 6}M8 ${c + 6}V${h - 2}H14`} stroke={color} strokeWidth="4" />
                    <circle cx="8" cy={c} r="6" fill="#fff" stroke={color} strokeWidth="4" />
                  </Svg>
                </Stripe>
              ))}
              {stripeLabels.map(([text, right, y, color], i) => (
                <StripeLabel key={i} $right={right} $y={y} $color={color}><Mixed>{text}</Mixed></StripeLabel>
              ))}
            </Stripes>
            <MemoLane />
            <Numbers>
              {paragraphs.map(([n, gap, lines, pitch = 44]) => (
                <NumberCell key={n} $h={lines.length * pitch} $gap={gap}>{n}</NumberCell>
              ))}
            </Numbers>
            <Text>
              {paragraphs.map(([n, gap, lines, pitch = 44, after = gap]) => (
                <Paragraph key={n} $lines={lines.length} $pitch={pitch} $gap={after}>{lines.join("\n")}</Paragraph>
              ))}
            </Text>
          </Page>
        </Browser>
      </Main>

      <Status>
        <StatusItem $w={155} $gap={8}><StatusDoc />0</StatusItem>
        <StatusItem $w={160} $gap={5}><StatusTag />0</StatusItem>
        <StatusItem $w={156} $gap={6}><StatusCodes />0</StatusItem>
        <StatusItem $w={162}><StatusCodeVar /></StatusItem>
        <StatusItem $w={158}><StatusDocVar /></StatusItem>
        <StatusItem $w={158}><StatusPerson /></StatusItem>
        <StatusItem $w={156}><StatusExport /></StatusItem>
        <StatusItem $gap={4}><StatusQuery />Simple Coding Query (OR combination of codes)</StatusItem>
      </Status>
    </Shell>
  );
}
